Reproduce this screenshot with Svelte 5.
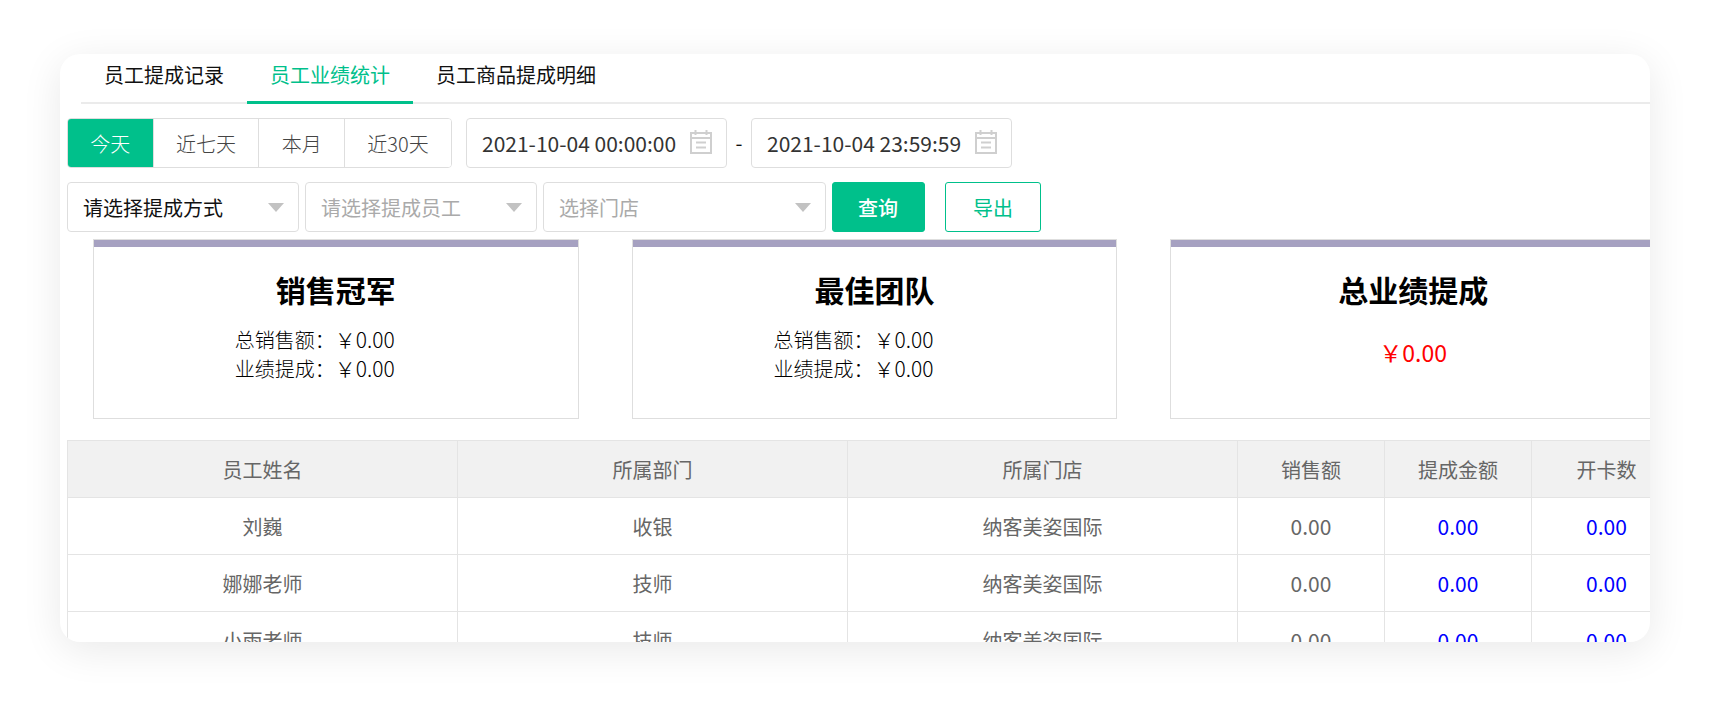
<script>
  const tabs = ['员工提成记录', '员工业绩统计', '员工商品提成明细'];
  const ranges = ['今天', '近七天', '本月', '近30天'];
  let activeTab = $state(1);
  let activeRange = $state(0);
  let start = $state('2021-10-04 00:00:00');
  let end = $state('2021-10-04 23:59:59');

  const filters = [
    { label: '请选择提成方式', size: 'normal', chosen: true },
    { label: '请选择提成员工', size: 'normal', chosen: false },
    { label: '选择门店', size: 'wide', chosen: false }
  ];

  const cards = [
    { title: '销售冠军', sales: '0.00', bonus: '0.00' },
    { title: '最佳团队', sales: '0.00', bonus: '0.00' },
    { title: '总业绩提成', total: '0.00' }
  ];

  const columns = ['员工姓名', '所属部门', '所属门店', '销售额', '提成金额', '开卡数'];
  const rows = [
    ['刘巍', '收银', '纳客美姿国际', '0.00', '0.00', '0.00'],
    ['娜娜老师', '技师', '纳客美姿国际', '0.00', '0.00', '0.00'],
    ['小雨老师', '技师', '纳客美姿国际', '0.00', '0.00', '0.00']
  ];
</script>

{#snippet calendar()}
  <svg class="calendar" viewBox="0 0 22 24" aria-hidden="true">
    <path d="M1 3h20v20H1zM1 8h20M5.500 0v5M16.500 0v5M6 12.500h10M6 17.500h10" />
  </svg>
{/snippet}

<main class="page">
  <section class="panel">
    <nav class="tabs">
      {#each tabs as tab, i}
        <button class="tab" class:active={i === activeTab} onclick={() => (activeTab = i)}>{tab}</button>
      {/each}
    </nav>

    <div class="row">
      <div class="ranges">
        {#each ranges as range, i}
          <button class:active={i === activeRange} onclick={() => (activeRange = i)}>{range}</button>
        {/each}
      </div>
      <div class="dates">
        <label class="date">
          <input type="text" aria-label="开始时间" bind:value={start} />
          {@render calendar()}
        </label>
        <span class="dash">-</span>
        <label class="date">
          <input type="text" aria-label="结束时间" bind:value={end} />
          {@render calendar()}
        </label>
      </div>
    </div>

    <div class="row filters">
      {#each filters as f}
        <label class="picker {f.size}" class:chosen={f.chosen}>
          <select aria-label={f.label}>
            <option>{f.label}</option>
          </select>
          <svg class="caret" viewBox="0 0 16 9" aria-hidden="true"><path d="M0 0h16L8 9z" /></svg>
        </label>
      {/each}
      <button class="action primary">查询</button>
      <button class="action outline">导出</button>
    </div>

    <div class="cards">
      {#each cards as card}
        <article class="card">
          <h2>{card.title}</h2>
          {#if card.total}
            <p class="total">￥{card.total}</p>
          {:else}
            <div class="figures">
              <p>总销售额：<span class="num">￥{card.sales}</span></p>
              <p>业绩提成：<span class="num">￥{card.bonus}</span></p>
            </div>
          {/if}
        </article>
      {/each}
    </div>

    <table>
      <colgroup>
        <col /><col /><col />
        <col class="amount" /><col class="amount" /><col class="count" />
      </colgroup>
      <thead>
        <tr>
          {#each columns as column}
            <th scope="col">{column}</th>
          {/each}
        </tr>
      </thead>
      <tbody>
        {#each rows as row}
          <tr>
            {#each row as cell, i}
              <td class:num={i > 2}>
                {#if i > 3}<a href="#detail">{cell}</a>{:else}{cell}{/if}
              </td>
            {/each}
          </tr>
        {/each}
      </tbody>
    </table>
  </section>
</main>

<style>
  :global(body) {
    margin: 0;
    background: #fff;
  }

  .page {
    box-sizing: border-box;
    height: 100vh;
    padding: 54px 60px 66px;
    overflow: hidden;
    font-family: 'Noto Sans CJK SC', sans-serif;
    font-size: 20px;
    color: #111;
  }

  .page :is(button, input, select) {
    margin: 0;
    font: inherit;
    color: inherit;
    box-sizing: border-box;
  }

  button {
    cursor: pointer;
  }

  .panel {
    box-sizing: border-box;
    height: 100%;
    padding-left: 7px;
    overflow: hidden;
    background: #fff;
    border-radius: 20px;
    box-shadow: 0 8px 40px rgba(0, 0, 0, 0.09);
  }

  .tabs {
    display: flex;
    height: 50px;
    margin-left: 14px;
    box-shadow: inset 0 -2px #ebebeb;
  }

  .tab {
    padding: 0 23px 6px;
    border: 0;
    border-bottom: 3px solid transparent;
    background: none;
    line-height: 39px;
  }

  .page .tab.active {
    color: #00c08b;
    border-bottom-color: #00c08b;
  }

  .row {
    display: flex;
    height: 50px;
    margin-top: 14px;
  }

  .ranges {
    display: flex;
    box-sizing: border-box;
    min-width: 385px;
    border: 1px solid #dedede;
    border-radius: 4px;
    overflow: hidden;
    color: #444;
    font-weight: 300;
  }

  .ranges button {
    flex: 1 0 auto;
    padding: 0 22px;
    border: 0;
    border-right: 1px solid #dedede;
    background: #fff;
  }

  .ranges button:last-child {
    border-right: 0;
  }

  .page .ranges button.active {
    background: #00c08b;
    color: #fff;
  }

  .dates {
    display: flex;
    margin-left: 14px;
  }

  .date {
    display: flex;
    align-items: center;
    box-sizing: border-box;
    width: 261px;
    padding: 0 14px 0 15px;
    border: 1px solid #dedede;
    border-radius: 4px;
  }

  .date input {
    flex: 1;
    min-width: 0;
    padding: 0;
    border: 0;
    outline: 0;
    background: none;
    font-size: 21px;
    color: #333;
  }

  .calendar {
    width: 22px;
    height: 24px;
    margin-bottom: 2px;
    fill: none;
    stroke: #cfcfcf;
    stroke-width: 2;
  }

  .dash {
    width: 24px;
    line-height: 50px;
    text-align: center;
  }

  .page .filters {
    margin-top: 14px;
  }

  .picker {
    display: grid;
    align-items: center;
    width: 232px;
    margin-right: 6px;
    color: #aaa;
  }

  .picker.wide {
    width: 283px;
  }

  .picker.chosen {
    color: #111;
  }

  .picker select,
  .picker .caret {
    grid-area: 1 / 1;
  }

  .picker select {
    width: 100%;
    height: 50px;
    padding: 0 40px 0 15px;
    appearance: none;
    border: 1px solid #dedede;
    border-radius: 4px;
    background: #fff;
  }

  .picker .caret {
    justify-self: end;
    width: 16px;
    height: 9px;
    margin-right: 15px;
    fill: #c2c2c2;
    pointer-events: none;
  }

  .action {
    padding: 1px 27px 0;
    border: 1px solid #00c08b;
    border-radius: 3px;
  }

  .page .primary {
    padding: 0 26px 0 25px;
    background: #00c08b;
    color: #fff;
    font-weight: 500;
  }

  .page .outline {
    margin-left: 20px;
    background: #fff;
    color: #00c08b;
  }

  .cards {
    display: grid;
    grid-template-columns: repeat(3, 1fr);
    gap: 53px;
    margin: 7px -6px 0 26px;
  }

  .card {
    box-sizing: border-box;
    height: 180px;
    border: 1px solid #dedede;
    text-align: center;
    box-shadow: inset 0 7px #a6a1c1;
  }

  h2 {
    margin: 27px 0 0;
    font-size: 30px;
    line-height: 44px;
    font-weight: 700;
    color: #000;
  }

  .card p {
    margin: 0;
    line-height: 29px;
  }

  .figures {
    margin: 14px 42px 0 0;
    font-weight: 300;
    color: #000;
  }

  .num {
    font-size: 21px;
  }

  .card .total {
    margin-top: 27px;
    font-size: 23px;
    color: #f00;
  }

  table {
    width: calc(100% + 32px);
    margin-top: 21px;
    table-layout: fixed;
    border-collapse: collapse;
    text-align: center;
    color: #666;
  }

  .amount {
    width: 147px;
  }

  .count {
    width: 150px;
  }

  th,
  td {
    box-sizing: border-box;
    height: 57px;
    padding: 2px 0 0;
    border: 1px solid #e4e4e4;
    font-weight: 400;
    line-height: 30px;
  }

  td.num {
    padding: 0;
  }

  th {
    background: #f1f1f1;
  }

  td a {
    color: #00f;
    text-decoration: none;
  }
</style>
